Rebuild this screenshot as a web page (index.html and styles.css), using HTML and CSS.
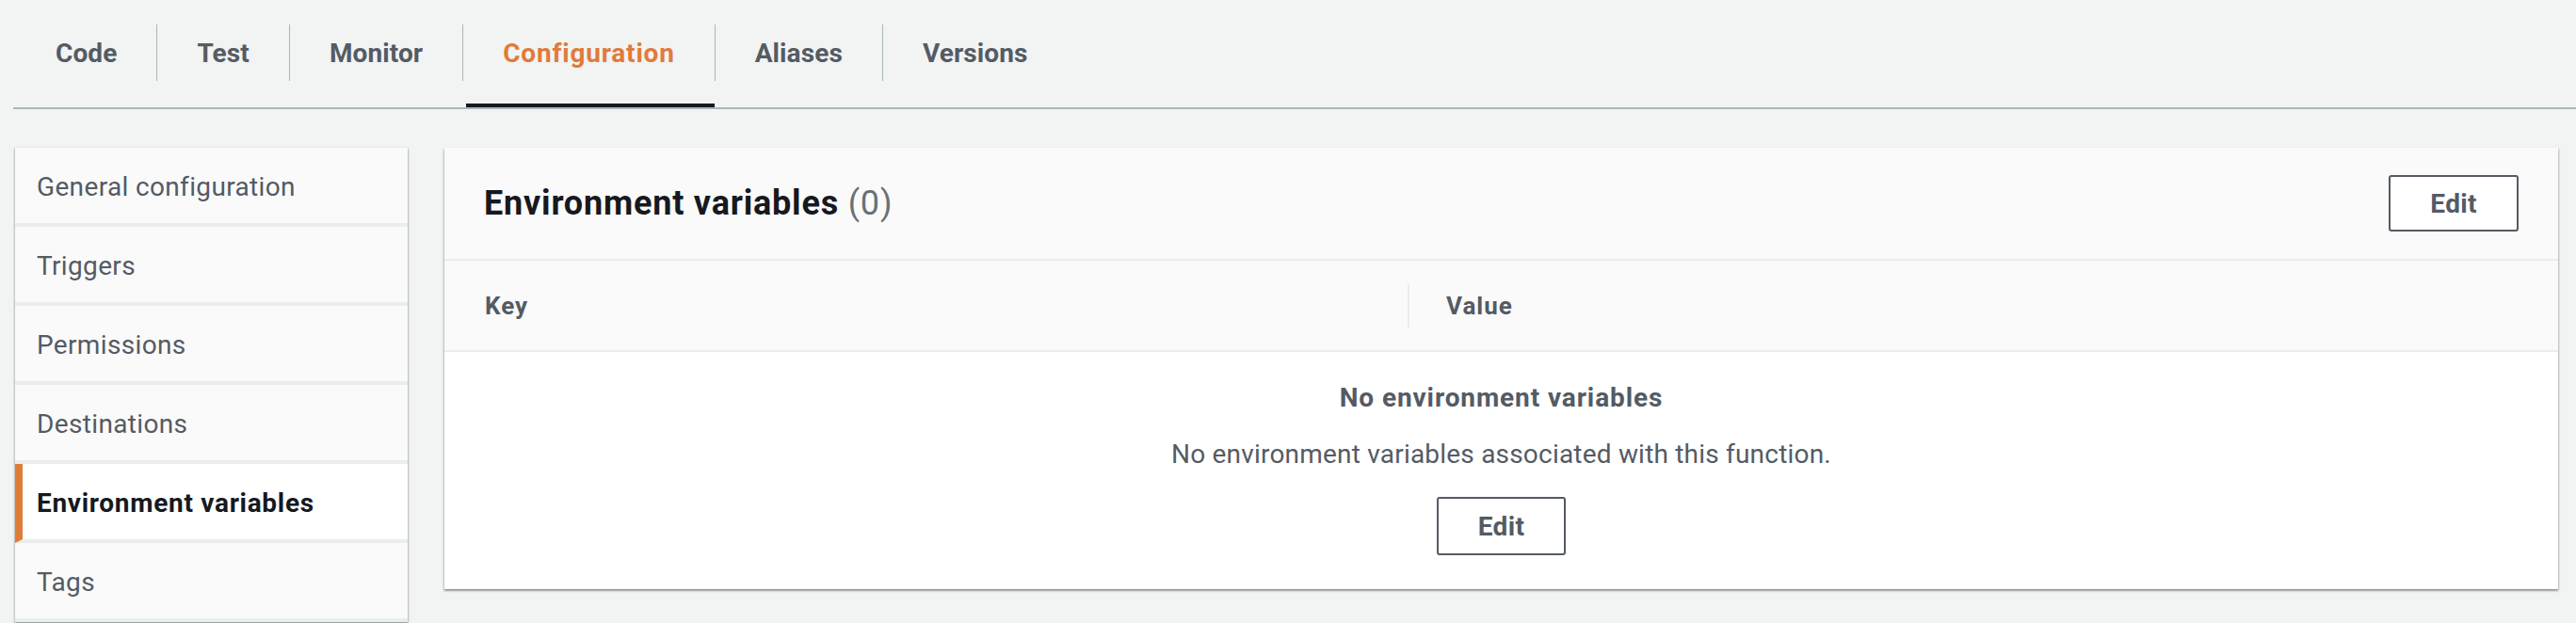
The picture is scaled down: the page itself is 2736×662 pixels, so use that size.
FILE: index.html
```html
<!DOCTYPE html>
<html lang="en">
<head>
<meta charset="utf-8">
<title>Lambda configuration</title>
<link rel="stylesheet" href="styles.css">
</head>
<body>
<nav class="tabs">
  <div class="tab">Code</div>
  <div class="tab">Test</div>
  <div class="tab">Monitor</div>
  <div class="tab tab-active">Configuration</div>
  <div class="tab">Aliases</div>
  <div class="tab">Versions</div>
</nav>
<div class="content">
  <ul class="sidenav">
    <li class="nav-item">General configuration</li>
    <li class="nav-item">Triggers</li>
    <li class="nav-item">Permissions</li>
    <li class="nav-item">Destinations</li>
    <li class="nav-item nav-active">Environment variables</li>
    <li class="nav-item">Tags</li>
  </ul>
  <section class="panel">
    <header class="panel-header">
      <h2 class="panel-title">Environment variables <span class="count">(0)</span></h2>
      <button class="btn">Edit</button>
    </header>
    <div class="col-headers">
      <div class="col col-key">Key</div>
      <div class="col col-value"><span class="divider"></span>Value</div>
    </div>
    <div class="empty">
      <div class="empty-title">No environment variables</div>
      <div class="empty-text">No environment variables associated with this function.</div>
      <button class="btn btn-tall">Edit</button>
    </div>
  </section>
</div>
</body>
</html>
```

FILE: styles.css
```css
html, body {
  margin: 0;
  padding: 0;
}
body {
  background: #f2f3f3;
  font-family: Roboto, "Liberation Sans", sans-serif;
  color: #545b64;
  width: 2736px;
  height: 662px;
  overflow: hidden;
}

/* Tabs */
.tabs {
  display: flex;
  margin-left: 14px;
  padding: 26px 0 28px 3px;
  border-bottom: 2px solid #aab7b8;
}
.tab {
  position: relative;
  height: 60px;
  display: flex;
  align-items: center;
  padding: 0 42px;
  font-size: 28px;
  font-weight: 700;
  letter-spacing: 0.1px;
  color: #545b64;
  border-left: 1px solid #aab7b8;
}
.tab:first-child {
  border-left: none;
}
.tab-compact {
  letter-spacing: -0.4px;
}
.tab-active {
  color: #e07b39;
  letter-spacing: 0.8px;
}
.tab-active::after {
  content: "";
  position: absolute;
  left: 3px;
  right: 0;
  bottom: -28px;
  height: 4px;
  background: #16191f;
}

/* Content */
.content {
  display: grid;
  grid-template-columns: 417px 1fr;
  column-gap: 39px;
  padding: 41px 19px 0 16px;
  align-items: start;
}

/* Side navigation */
.sidenav {
  list-style: none;
  margin: 0;
  padding: 0;
  background: #fafafa;
  box-shadow: 0 1px 2px 0 rgba(0, 28, 36, 0.3), 1px 1px 2px 0 rgba(0, 28, 36, 0.15), -1px 1px 2px 0 rgba(0, 28, 36, 0.15);
}
.nav-item {
  height: 78px;
  padding-top: 2px;
  display: flex;
  align-items: center;
  padding-left: 23px;
  font-size: 28px;
  letter-spacing: 0.35px;
  color: #545b64;
  border-bottom: 4px solid #eaeded;
}
.nav-active {
  background: #ffffff;
  color: #16191f;
  font-weight: 700;
  letter-spacing: 0.7px;
  border-left: 8px solid #e07b39;
  padding-left: 15px;
}

/* Panel */
.panel {
  background: #ffffff;
  box-shadow: 0 2px 2px 0 rgba(0, 28, 36, 0.3), 1px 1px 2px 0 rgba(0, 28, 36, 0.15), -1px 1px 2px 0 rgba(0, 28, 36, 0.15);
}
.panel-header {
  height: 118px;
  display: flex;
  align-items: center;
  justify-content: space-between;
  padding: 0 42px 0 42px;
  background: #fafafa;
  border-bottom: 2px solid #eaeded;
}
.panel-title {
  margin: 0;
  font-size: 36px;
  font-weight: 700;
  letter-spacing: 0.8px;
  color: #16191f;
}
.count {
  font-weight: 400;
  color: #687078;
}
.btn {
  font-family: Roboto, "Liberation Sans", sans-serif;
  height: 60px;
  padding: 0 42px;
  background: #ffffff;
  border: 2px solid #545b64;
  border-radius: 3px;
  font-size: 28px;
  font-weight: 700;
  letter-spacing: 0.4px;
  color: #545b64;
}
.btn-tall {
  height: 62px;
  margin-top: 25px;
}

.col-headers {
  display: grid;
  grid-template-columns: 1023px 1fr;
  height: 95px;
  background: #fafafa;
  border-bottom: 2px solid #eaeded;
}
.col {
  display: flex;
  align-items: center;
  font-size: 26px;
  font-weight: 700;
  letter-spacing: 1px;
  color: #545b64;
}
.col-key {
  padding-left: 43px;
}
.divider {
  width: 2px;
  height: 47px;
  background: #eaeded;
  margin-right: 39px;
}

.empty {
  text-align: center;
  padding: 29px 0 36px;
}
.empty-title {
  font-size: 28px;
  line-height: 40px;
  font-weight: 700;
  letter-spacing: 0.9px;
}
.empty-text {
  font-size: 28px;
  line-height: 40px;
  margin-top: 20px;
  letter-spacing: 0.2px;
}
```
